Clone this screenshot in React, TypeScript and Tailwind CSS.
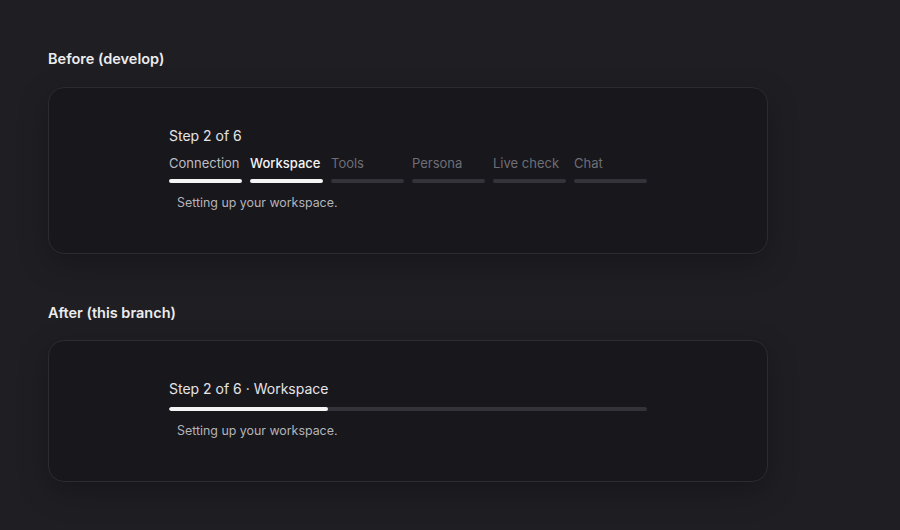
const steps = ["Connection", "Workspace", "Tools", "Persona", "Live check", "Chat"];
const current = 1;

function Card({ children, bottom }: { children: React.ReactNode; bottom: string }) {
  return (
    <div
      className={
        "w-[720px] rounded-2xl border border-[#2c2b31] bg-[#18171c] shadow-[0_10px_30px_rgba(0,0,0,0.25)] pt-[38px] " +
        bottom
      }
    >
      <div className="mx-auto w-[478px]">{children}</div>
    </div>
  );
}

function SegmentedProgress() {
  return (
    <Card bottom="pb-[41px]">
      <div className="text-[14px] leading-[20px] text-[#e4e4e7]">Step 2 of 6</div>
      <div className="mt-[8px] flex gap-2">
        {steps.map((s, i) => (
          <div key={s} className="flex-1 flex flex-col">
            <span
              className={
                "text-[13px] leading-[18px] whitespace-nowrap " +
                (i === current
                  ? "text-[#f4f4f5] font-medium"
                  : i < current
                  ? "text-[#bdbdc3]"
                  : "text-[#6e6e76]")
              }
            >
              {s}
            </span>
            <div
              className={
                "mt-[7px] h-[4px] rounded-full " +
                (i <= current ? "bg-[#f4f4f5]" : "bg-[#34333a]")
              }
            />
          </div>
        ))}
      </div>
      <p className="mt-[11px] pl-2 text-[12.4px] leading-[18px] text-[#b4b4ba]">
        Setting up your workspace.
      </p>
    </Card>
  );
}

function SingleProgress() {
  const pct = ((current + 1) / steps.length) * 100;
  return (
    <Card bottom="pb-[41px]">
      <div className="text-[14px] leading-[20px] text-[#e4e4e7]">
        Step 2 of 6 · Workspace
      </div>
      <div className="mt-[8px] h-[4px] rounded-full bg-[#34333a] overflow-hidden">
        <div className="h-full rounded-full bg-[#f4f4f5]" style={{ width: `${pct}%` }} />
      </div>
      <p className="mt-[11px] pl-2 text-[12.4px] leading-[18px] text-[#b4b4ba]">
        Setting up your workspace.
      </p>
    </Card>
  );
}

export default function App() {
  return (
    <div
      className="min-h-[530px] w-[900px] bg-[#1f1e23] px-12 pt-[49px]"
      style={{ fontFamily: "Inter, 'Noto Sans', sans-serif" }}
    >
      <h2 className="text-[14.5px] leading-[20px] font-semibold text-[#ececee]">Before (develop)</h2>
      <div className="mt-[18px]">
        <SegmentedProgress />
      </div>
      <h2 className="mt-[49px] text-[14.5px] leading-[20px] font-semibold text-[#ececee]">
        After (this branch)
      </h2>
      <div className="mt-[17px]">
        <SingleProgress />
      </div>
    </div>
  );
}
